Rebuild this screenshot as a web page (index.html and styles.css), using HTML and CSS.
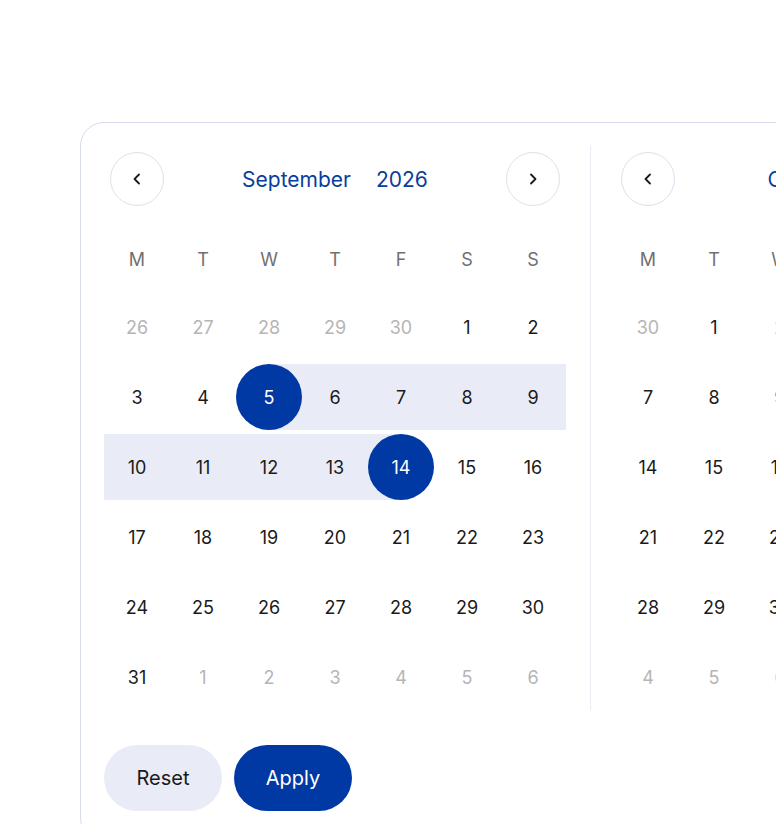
FILE: index.html
```html
<!DOCTYPE html>
<html>
<head>
<meta charset="utf-8">
<link rel="stylesheet" href="styles.css">
</head>
<body>
<div class="stage">
  <div class="card">
    <div class="months">
      <div class="month">
        <div class="head">
          <button class="nav"><svg width="16" height="16" viewBox="0 0 16 16"><path d="M10 3.5 5.5 8 10 12.5" fill="none" stroke="#1a1a1a" stroke-width="1.8" stroke-linecap="round" stroke-linejoin="round"/></svg></button>
          <div class="title"><span>September</span><span>2026</span></div>
          <button class="nav"><svg width="16" height="16" viewBox="0 0 16 16"><path d="M6 3.5 10.5 8 6 12.5" fill="none" stroke="#1a1a1a" stroke-width="1.8" stroke-linecap="round" stroke-linejoin="round"/></svg></button>
        </div>
        <div class="grid">
          <div class="wd">M</div><div class="wd">T</div><div class="wd">W</div><div class="wd">T</div><div class="wd">F</div><div class="wd">S</div><div class="wd">S</div>
          <div class="d mute">26</div><div class="d mute">27</div><div class="d mute">28</div><div class="d mute">29</div><div class="d mute">30</div><div class="d">1</div><div class="d">2</div>
          <div class="d">3</div><div class="d">4</div><div class="d sel start"><span>5</span></div><div class="d in">6</div><div class="d in">7</div><div class="d in">8</div><div class="d in">9</div>
          <div class="d in">10</div><div class="d in">11</div><div class="d in">12</div><div class="d in">13</div><div class="d sel end"><span>14</span></div><div class="d">15</div><div class="d">16</div>
          <div class="d">17</div><div class="d">18</div><div class="d">19</div><div class="d">20</div><div class="d">21</div><div class="d">22</div><div class="d">23</div>
          <div class="d">24</div><div class="d">25</div><div class="d">26</div><div class="d">27</div><div class="d">28</div><div class="d">29</div><div class="d">30</div>
          <div class="d">31</div><div class="d mute">1</div><div class="d mute">2</div><div class="d mute">3</div><div class="d mute">4</div><div class="d mute">5</div><div class="d mute">6</div>
        </div>
      </div>
      <div class="divider"></div>
      <div class="month">
        <div class="head">
          <button class="nav"><svg width="16" height="16" viewBox="0 0 16 16"><path d="M10 3.5 5.5 8 10 12.5" fill="none" stroke="#1a1a1a" stroke-width="1.8" stroke-linecap="round" stroke-linejoin="round"/></svg></button>
          <div class="title"><span>October</span><span>2026</span></div>
          <button class="nav"><svg width="16" height="16" viewBox="0 0 16 16"><path d="M6 3.5 10.5 8 6 12.5" fill="none" stroke="#1a1a1a" stroke-width="1.8" stroke-linecap="round" stroke-linejoin="round"/></svg></button>
        </div>
        <div class="grid">
          <div class="wd">M</div><div class="wd">T</div><div class="wd">W</div><div class="wd">T</div><div class="wd">F</div><div class="wd">S</div><div class="wd">S</div>
          <div class="d mute">30</div><div class="d">1</div><div class="d">2</div><div class="d">3</div><div class="d">4</div><div class="d">5</div><div class="d">6</div>
          <div class="d">7</div><div class="d">8</div><div class="d">9</div><div class="d">10</div><div class="d">11</div><div class="d">12</div><div class="d">13</div>
          <div class="d">14</div><div class="d">15</div><div class="d">16</div><div class="d">17</div><div class="d">18</div><div class="d">19</div><div class="d">20</div>
          <div class="d">21</div><div class="d">22</div><div class="d">23</div><div class="d">24</div><div class="d">25</div><div class="d">26</div><div class="d">27</div>
          <div class="d">28</div><div class="d">29</div><div class="d">30</div><div class="d">31</div><div class="d mute">1</div><div class="d mute">2</div><div class="d mute">3</div>
          <div class="d mute">4</div><div class="d mute">5</div><div class="d mute">6</div><div class="d mute">7</div><div class="d mute">8</div><div class="d mute">9</div><div class="d mute">10</div>
        </div>
      </div>
    </div>
    <div class="actions">
      <button class="btn reset">Reset</button>
      <button class="btn apply">Apply</button>
    </div>
  </div>
</div>
</body>
</html>
```
FILE: styles.css
```css
html, body {
  margin: 0;
  padding: 0;
  background: #ffffff;
  overflow: hidden;
  width: 776px;
  height: 824px;
}
body {
  font-family: Inter, "Noto Sans", "Liberation Sans", sans-serif;
  color: #1a1a1a;
}
.stage {
  padding: 122px 0 0 80px;
}
.card {
  width: 1100px;
  border: 1px solid #d8ddee;
  border-radius: 24px;
  padding: 23px 23px 30px 23px;
  box-sizing: border-box;
  background: #fff;
}
.months {
  display: flex;
  align-items: stretch;
}
.divider {
  width: 1px;
  background: #e9ecf3;
  margin: 0 24px 0 24px;
}
.month {
  width: 462px;
  flex: none;
  padding-top: 6px;
}
.head {
  display: flex;
  align-items: center;
  justify-content: space-between;
  padding: 0 6px;
  height: 54px;
}
.nav {
  width: 54px;
  height: 54px;
  border-radius: 50%;
  border: 1px solid #dde1ec;
  background: #fff;
  display: flex;
  align-items: center;
  justify-content: center;
  padding: 0;
}
.title {
  display: flex;
  gap: 25px;
  color: #0a3d9c;
  font-size: 21px;
  font-weight: 400;
}
.grid {
  display: grid;
  grid-template-columns: repeat(7, 66px);
  grid-template-rows: 61px;
  grid-auto-rows: 66px;
  row-gap: 4px;
  margin-top: 23px;
}
.wd {
  display: flex;
  align-items: center;
  justify-content: center;
  color: #707070;
  font-size: 18px;
}
.d {
  display: flex;
  align-items: center;
  justify-content: center;
  font-size: 18px;
  color: #1a1a1a;
}
.d.mute {
  color: #b5b5b5;
}
.d.in {
  background: #e9ecf6;
}
.d.sel span {
  width: 66px;
  height: 66px;
  border-radius: 50%;
  background: #0039a3;
  color: #fff;
  display: flex;
  align-items: center;
  justify-content: center;
}
.d.start {
  background: linear-gradient(to right, transparent 50%, #e9ecf6 50%);
}
.d.end {
  background: linear-gradient(to right, #e9ecf6 50%, transparent 50%);
}
.actions {
  display: flex;
  gap: 12px;
  margin-top: 35px;
}
.btn {
  width: 118px;
  height: 66px;
  border-radius: 33px;
  border: none;
  font-family: inherit;
  font-size: 20px;
}
.reset {
  background: #e9ecf6;
  color: #1a1a1a;
}
.apply {
  background: #0039a3;
  color: #fff;
}
```
